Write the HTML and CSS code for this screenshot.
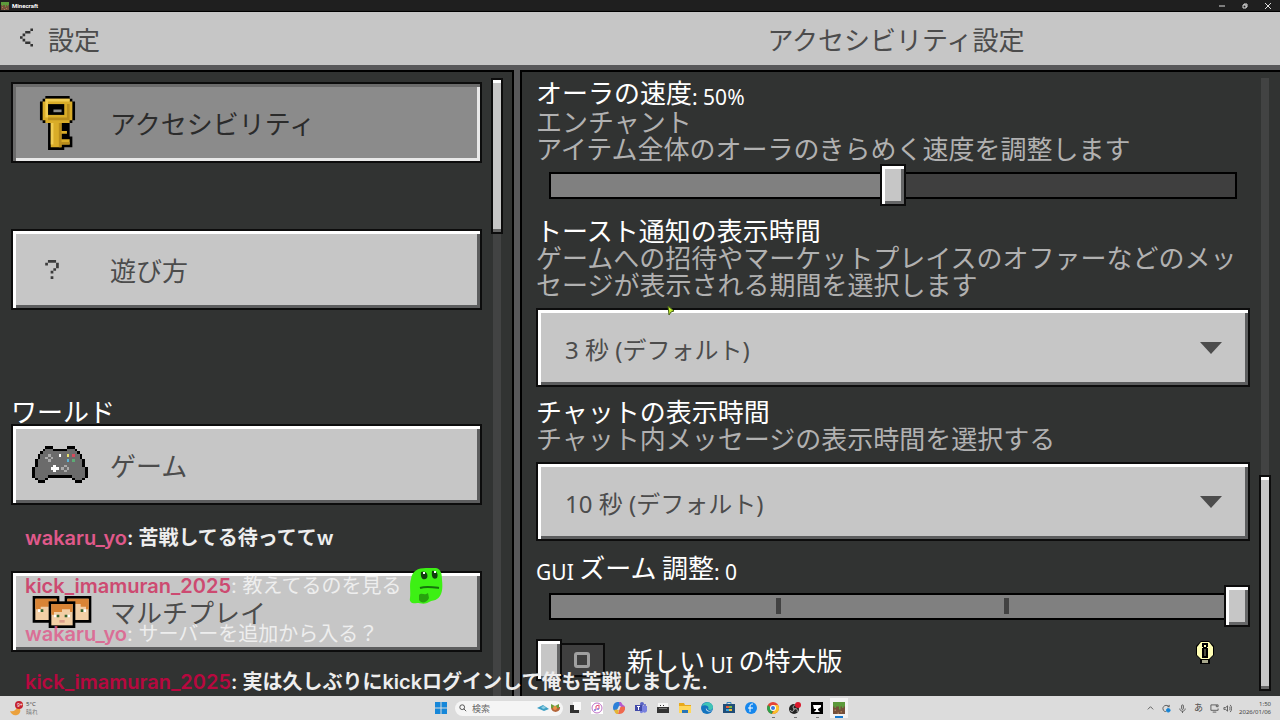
FILE: index.html
```html
<!DOCTYPE html>
<html lang="ja">
<head>
    <meta charset="UTF-8">
    <meta name="viewport" content="width=device-width, initial-scale=1.0">
    <title>Minecraft</title>
    <link rel="stylesheet" href="styles.css">
</head>
<body>
    <div class="titlebar">
        <svg class="grass" viewBox="0 0 8 8"><path fill="#76503a" d="M0 0h8v8H0z"/><path fill="#5d9a3b" d="M0 0h8v3H7v1H6V3H5v2H4V3H2v1H1V3H0z"/><path fill="#a87b58" d="M1 5h1v1H1zM5 6h1v1H5zM3 7h1v1H3z"/></svg>
        <span class="app-name">Minecraft</span>
        <div class="window-buttons">
            <button aria-label="最小化"><svg viewBox="0 0 8 8"><path d="M1 4h6"/></svg></button>
            <button aria-label="元に戻す"><svg viewBox="0 0 8 8"><path d="M2 3h3v3H2zM3 3V2h3v3H5"/></svg></button>
            <button aria-label="閉じる"><svg viewBox="0 0 8 8"><path d="M1 1l6 6M7 1L1 7"/></svg></button>
        </div>
    </div>

    <header class="header">
        <button class="back">
            <svg viewBox="0 0 5 7"><path d="M4 0h1v1H4zM3 1h1v1H3zM2 1h1v1H2zM1 2h1v1H1zM0 3h1v1H0zM1 4h1v1H1zM2 5h1v1H2zM3 5h1v1H3zM4 6h1v1H4z"/></svg>
            設定
        </button>
        <h1>アクセシビリティ設定</h1>
    </header>

    <main class="panels">
        <div class="panel panel-left">
            <nav class="menu">
                <button class="menu-item active">
                    <svg class="icon key" viewBox="0 0 13 20">
                        <path d="M2 0h9v1h1v1h1v7h-1v1h-1v5h1v4H9v1H3V10H1V9H0V2h1V1h1z"/>
                        <path fill="#d9ac28" d="M2 1h9v1h1v7h-1v1H2V9H1V2h1zM4 10h4v9H4zM8 13h2v1H8zM8 16h3v2H8z"/>
                        <path fill="#f0cc52" d="M2 1h9v1H3v6H2zM4 10h1v8H4z"/>
                        <path fill="#b88c1c" d="M10 3h1v6H3V8h7zM7 10h1v9H7zM8 17h3v1H8z"/>
                        <path d="M3 3h6v4H3z"/><path fill="#8b8b8b" d="M5 5h3v1H5z"/>
                    </svg>
                    アクセシビリティ
                </button>
                <button class="menu-item">
                    <svg class="icon question" viewBox="0 0 5 7"><path fill="#3c3c3c" d="M1 0h3v1h1v2H4v1H3v1H2V4h1V3h1V1H1v1H0V1h1zM2 6h1v1H2z"/></svg>
                    遊び方
                </button>
                <h2>ワールド</h2>
                <button class="menu-item">
                    <svg class="icon pad" viewBox="0 0 21 14" shape-rendering="crispEdges">
                        <path d="M5 0h3v1h5V0h3v1h1v1h1v1h1v2h1v3h1v4h-1v1h-1v1h-3v-1h-1v-1H6v1H5v1H2v-1H1v-1H0V8h1V5h1V3h1V2h1V1h1z"/>
                        <path fill="#6b6b6b" d="M5 1h3v1h5V1h3v1h1v1h1v2h1v3h1v4h-1v1h-3v-1h-1v-1H6v1H5v1H2v-1H1V8h1V5h1V3h1V2h1z"/>
                        <path fill="#fff" d="M8 7h1v1h1v1H9v1H8V9H7V8h1zM10 3h1v1h-1z"/>
                        <path fill="#aaa" d="M6 3h1v1H6zM5 4h1v1H5zM7 4h1v1H7zM6 5h1v1H6zM12 7h1v1h-1zM11 8h1v1h-1zM13 8h1v1h-1zM12 9h1v1h-1z"/>
                        <path fill="#e7e06a" d="M13 3h1v1h-1z"/><path fill="#d64a5c" d="M15 3h1v1h-1z"/><path fill="#58b3d6" d="M13 5h1v1h-1z"/><path fill="#5dab75" d="M15 5h1v1h-1z"/>
                    </svg>
                    ゲーム
                </button>
                <button class="menu-item">
                    <svg class="icon faces" viewBox="0 0 22 12">
                        <path d="M0 0h10v10H0zM12 0h10v10H12z"/>
                        <path fill="#f2cfa6" d="M1 1h8v8H1zM13 1h8v8h-8z"/>
                        <path fill="#d98435" d="M1 1h8v2H6v1H3v1H1zM13 1h8v4h-1V4h-2V3h-5z"/>
                        <path fill="#fff" d="M2 5h1v1H2zM19 5h1v1h-1z"/>
                        <path fill="#35622b" d="M3 5h1v1H3zM18 5h1v1h-1z"/>
                        <path d="M6 2h10v10H6z"/>
                        <path fill="#f2cfa6" d="M7 3h8v8H7z"/>
                        <path fill="#d98435" d="M7 3h8v3h-1V5h-3v1H8v1H7z"/>
                        <path fill="#fff" d="M8 7h1v1H8zM13 7h1v1h-1z"/><path fill="#35622b" d="M9 7h1v1H9zM12 7h1v1h-1z"/><path fill="#dc9d8b" d="M10 9h2v1h-2z"/>
                    </svg>
                    マルチプレイ
                </button>
            </nav>
            <div class="scroll"><div class="thumb"></div></div>
        </div>

        <div class="panel panel-right">
            <div class="settings">
                <section>
                    <label class="name" for="glint">オーラの速度<span class="latin">: 50%</span></label>
                    <p>エンチャント<br>アイテム全体のオーラのきらめく速度を調整します</p>
                    <input class="slider" type="range" id="glint" min="0" max="100" value="50">
                </section>
                <section>
                    <label class="name" for="toast">トースト通知の表示時間</label>
                    <p>ゲームへの招待やマーケットプレイスのオファーなどのメッセージが表示される期間を選択します</p>
                    <div class="dropdown">
                        <select id="toast"><option>3 秒 (デフォルト)</option></select>
                        <svg viewBox="0 0 22 12"><path d="M0 0h22L11 12z"/></svg>
                    </div>
                </section>
                <section>
                    <label class="name" for="chat-time">チャットの表示時間</label>
                    <p>チャット内メッセージの表示時間を選択する</p>
                    <div class="dropdown">
                        <select id="chat-time"><option>10 秒 (デフォルト)</option></select>
                        <svg viewBox="0 0 22 12"><path d="M0 0h22L11 12z"/></svg>
                    </div>
                </section>
                <section class="gui-zoom">
                    <label class="name" for="zoom"><span class="latin">GUI </span>ズーム<span class="latin"> </span>調整<span class="latin">: 0</span></label>
                    <input class="slider steps" type="range" id="zoom" min="-3" max="0" value="0">
                </section>
                <div class="toggle-row">
                    <input type="checkbox" id="large-ui">
                    <label for="large-ui">新しい<span class="latin"> UI </span>の特大版</label>
                    <svg class="bulb" viewBox="0 0 18 23"><path d="M5 0h8l5 5v9l-4 4v5H4v-5l-4-4V5z"/><path fill="#ffffb5" d="M5 1h8l4 5v8l-4 4H5l-4-4V6z"/><path d="M6 2h6v5H6zM6 7h6v10H6z"/><path fill="#ffffb5" d="M8 4h2v2H8zM6 6h1v1H6zM11 6h1v1h-1z"/><path fill="#4e4e40" d="M8 8h2v7H8z"/><path fill="#a5a58a" d="M6 19h6v3H6z"/></svg>
                </div>
            </div>
            <div class="scroll"><div class="thumb"></div></div>
        </div>
    </main>

    <div class="chat">
        <div class="line"><b class="pink">wakaru_yo</b><b>: 苦戦してる待っててw</b></div>
        <div class="line faded"><b class="rose">kick_imamuran_2025</b><span>: 教えてるのを見る</span><svg class="emote" viewBox="0 0 34 38">
                <path fill="#3df014" d="M2 12C3 4 9 1 17 1h10c5 1 6 6 6 12 1 9 0 16-5 19-2 2-5 1-8 3-4 3-9 1-12 1-5 1-8-1-7-5 1-6-1-13 1-19z"/>
                <path fill="#123d10" d="M12 5c4-2 8 2 6 6-3 3-7 1-6-6zM23 4c4-1 7 3 5 7-3 2-6 0-5-7z"/>
                <path fill="#fff" d="M14 5h2v2h-2zM25 4h2v2h-2z"/>
                <path fill="none" stroke="#16730c" stroke-width="2" d="M11 21c6-2 12-1 19 0"/>
                <path fill="#27a30e" d="M10 28c3-3 5 1 9-2l1 5c-2 5-8 6-10 2z"/>
            </svg></div>
        <div class="line faded"><b class="pink">wakaru_yo</b><span>: サーバーを追加から入る？</span></div>
        <div class="line"><b class="crimson">kick_imamuran_2025</b><b>: 実は久しぶりにkickログインして俺も苦戦しました.</b></div>
    </div>
    <svg class="cursor" viewBox="0 0 8 10"><path d="M1 0l6 5-3 1-2 3z"/></svg>

    <footer class="taskbar">
        <div class="weather">
            <svg viewBox="0 0 16 16"><path fill="#eba13c" d="M1 11c4 1 6-1 7-4 5 1 4 7 0 8-3 1-6-1-7-4z"/><circle cx="10" cy="5" r="4" fill="#c5222f"/><text x="8" y="7">9+</text></svg>
            <div>5°C<br><span>晴れ</span></div>
        </div>
        <div class="apps">
            <button aria-label="スタート"><svg viewBox="0 0 12 12"><path fill="#1687d9" d="M0 0h5.5v5.5H0zM6.500 0H12v5.500H6.500zM0 6.500h5.500V12H0zM6.500 6.500H12V12H6.500z"/></svg></button>
            <label class="search">
                <svg class="lens" viewBox="0 0 10 10"><circle cx="4" cy="4" r="3"/><path d="M6 6l3 3"/></svg>
                <input type="text" placeholder="検索" aria-label="検索">
                <svg class="art" viewBox="0 0 24 10"><path fill="#3d9fc4" d="M0 5l6-3 6 4-5 2z"/><path fill="#8fd0e4" d="M4 4l3-1 2 2-3 1z"/><path fill="#b4653a" d="M14 4h9c1 6-9 7-9 0z"/><path fill="#6c9d3d" d="M14 1l4 2 4-2v4h-8z"/><circle cx="18" cy="5" r="2" fill="#ee9348"/></svg>
            </label>
            <button aria-label="タスク ビュー"><svg viewBox="0 0 12 12"><path fill="#fafafa" d="M4 0h8v8H4z"/><path fill="#303030" d="M1 3h4v5h5v3H1z"/></svg></button>
            <button aria-label="ミュージック"><svg viewBox="0 0 12 12"><path fill="#fff" d="M0 0h12v12H0z"/><circle cx="6" cy="6" r="5" fill="none" stroke="#bd70c4"/><path fill="none" stroke="#e74b77" d="M5 8V4l3-1v4"/><circle cx="4" cy="8" r="1" fill="#7b70e1"/><circle cx="7" cy="7" r="1" fill="#7b70e1"/></svg></button>
            <button aria-label="Copilot"><svg viewBox="0 0 12 12"><path fill="#2c80d8" d="M0 6c0-4 2-6 5-6h3L5 8C3 10 0 9 0 6z"/><path fill="#b35ad2" d="M6 0c3-1 3 3 4 3 3 1 2 4 1 6L7 5z"/><path fill="#f0694d" d="M12 7c-1 4-3 5-7 5l2-7c3-1 6-1 5 2z"/><path fill="#e6b434" d="M1 8l5-1-1 5c-3 0-3-2-4-4z"/><path fill="#ddd" d="M6 4h2L6 8H4z"/></svg></button>
            <button aria-label="Teams"><svg viewBox="0 0 12 12"><circle cx="7" cy="2" r="2" fill="#5962c5"/><circle cx="10" cy="3" r="1" fill="#5962c5"/><path fill="#7880df" d="M5 4h7v5c-1 2-3 2-4 1-1 2-3 1-3 0z"/><path fill="#424aa9" d="M0 3h7v6H0z"/><path stroke="#fff" d="M2 4.500h3M3.500 4v4"/></svg></button>
            <button aria-label="録画"><svg viewBox="0 0 12 12"><path fill="#f5f5f5" d="M1 1h10v4H1z"/><path fill="#333" d="M0 5h12v6H0zM3 3h1v1H3zM6 3h1v1H6z"/><path fill="#777" d="M2 6h8v1H2z"/></svg></button>
            <button aria-label="エクスプローラー"><svg viewBox="0 0 12 12"><path fill="#e8a91b" d="M0 1h5l1 2h6v7H0z"/><path fill="#ffd75a" d="M0 4h12v7H0z"/><path fill="#2875b8" d="M3 8h6v3H3z"/></svg></button>
            <button aria-label="Edge"><svg viewBox="0 0 12 12"><circle cx="6" cy="6" r="6" fill="#1474bf"/><path fill="#40c4b6" d="M1 4c2-5 10-5 11 1 0 3-3 4-5 2 2-3-3-5-6-3z"/><path fill="#e1eef4" d="M5 6c1 3 4 4 6 2-2 3-7 1-6-2z"/></svg></button>
            <button aria-label="Store"><svg viewBox="0 0 12 12"><path fill="#204d78" d="M0 2h12v9H0z"/><path fill="none" stroke="#3a86bd" d="M4 2V.500h4V2"/><path fill="#e95b38" d="M3 4h3v2H3z"/><path fill="#7ab843" d="M6 4h3v2H6z"/><path fill="#35a7df" d="M3 7h3v2H3z"/><path fill="#f3bd35" d="M6 7h3v2H6z"/></svg></button>
            <button aria-label="音楽アプリ"><svg viewBox="0 0 12 12"><circle cx="6" cy="6" r="6" fill="#1687ed"/><path fill="none" stroke="#fff" d="M5 10V4c0-2 2-2 3-2M3 6h5"/></svg></button>
            <button class="running" aria-label="Chrome"><svg viewBox="0 0 12 12"><circle cx="6" cy="6" r="6" fill="#e54335"/><path fill="#2ca24c" d="M1 3l5 5-1 4C0 11-1 6 1 3z"/><path fill="#fac32c" d="M6 3h5c3 5-1 9-6 9l3-5z"/><circle cx="6" cy="6" r="3" fill="#fff"/><circle cx="6" cy="6" r="2" fill="#3978dc"/></svg></button>
            <button class="running" aria-label="OBS"><svg viewBox="0 0 12 12"><circle cx="5" cy="7" r="5" fill="#222"/><path fill="none" stroke="#bbb" d="M5 7c-2-2 0-4 1-4M5 7c3-1 4 1 3 3M5 7c0 3-3 3-4 1"/><circle cx="9" cy="3" r="3" fill="#d9182b"/></svg></button>
            <button class="running" aria-label="ツール"><svg viewBox="0 0 12 12"><path d="M0 0h12v12H0z"/><path fill="#fff" d="M2 3h8v2L7 7v1l2 2H3l2-2V7H3z"/></svg></button>
            <button class="running current" aria-label="Minecraft"><svg viewBox="0 0 8 8"><path fill="#76503a" d="M0 0h8v8H0z"/><path fill="#5d9a3b" d="M0 0h8v3H7v1H6V3H5v2H4V3H2v1H1V3H0z"/><path fill="#a87b58" d="M1 5h1v1H1zM5 6h1v1H5zM3 7h1v1H3z"/></svg></button>
        </div>
        <div class="tray">
            <svg viewBox="0 0 10 10"><path d="M2 6l3-3 3 3"/></svg>
            <svg viewBox="0 0 10 10"><path d="M8 3C5 0 1 2 1 5s3 4 4 3M8 1v2H6"/><circle cx="7" cy="7" r="2" fill="#1484d6" stroke="#1484d6"/></svg>
            <svg viewBox="0 0 10 10"><rect x="4" y="1" width="2" height="5" rx="1"/><path d="M2 5c0 4 6 4 6 0M5 8v2"/></svg>
            <span>あ</span>
            <div class="devices">
                <svg viewBox="0 0 10 10"><path d="M7 1H1v6h8V5M3 9h4M7 1h2v2H7z"/></svg>
                <svg viewBox="0 0 10 10"><path d="M1 4h2l2-2v6L3 6H1zM7 3c1 1 1 3 0 4M8 1c2 2 2 6 0 8"/></svg>
            </div>
            <div class="clock">1:50<br>2026/01/06</div>
        </div>
    </footer>
</body>
</html>
```
FILE: styles.css
```css
*, *::before, *::after {
    box-sizing: border-box;
}

body {
    margin: 0;
    height: 100vh;
    display: flex;
    flex-direction: column;
    overflow: hidden;
    position: relative;
    background-color: #313332;
    color: #fff;
    font-family: "Noto Sans CJK JP", "Noto Sans", sans-serif;
    font-size: 26px;
    line-height: 27px;
}

button, input, select {
    font: inherit;
    margin: 0;
}

button {
    border: none;
    padding: 0;
    background: none;
    color: inherit;
}

h1, h2, p {
    margin: 0;
    font-size: inherit;
    font-weight: normal;
}

svg {
    display: block;
    flex-shrink: 0;
}

/* window title bar */
.titlebar {
    flex: 0 0 12px;
    display: flex;
    align-items: center;
    background-color: #1f1f1f;
    border-bottom: 1px solid #000;
    font-family: Roboto, sans-serif;
    font-size: 6px;
    font-weight: bold;
    line-height: 10px;
}

.grass {
    width: 8px;
    height: 8px;
    margin: 0 3px 0 1px;
}

.window-buttons {
    margin-left: auto;
    display: flex;
    gap: 15px;
    padding-right: 8px;
}

.window-buttons svg {
    width: 8px;
    height: 8px;
    fill: none;
    stroke: #ddd;
}

/* header */
.header {
    flex: 0 0 58px;
    display: grid;
    grid-template-columns: 40% 1fr;
    align-items: center;
    background-color: #c6c6c6;
    border-bottom: 5px solid #58585a;
    color: #4c4c4c;
}

.header h1 {
    text-align: center;
}

.back {
    display: flex;
    align-items: center;
    gap: 15px;
    padding-left: 20px;
}

.back svg {
    width: 13px;
    height: 19px;
    margin-bottom: 2px;
    fill: #333;
}

/* panels */
.panels {
    flex: 1;
    min-height: 0;
    display: grid;
    grid-template-columns: calc(40% + 2px) 1fr;
    gap: 6px;
    background-color: #58585a;
}

.panel {
    min-height: 0;
    overflow: hidden;
    display: flex;
    background-color: #313332;
    border-top: 2px solid #000;
}

.panel-left {
    border-right: 2px solid #000;
    padding-right: 9px;
}

.panel-right {
    border-left: 2px solid #000;
    padding-right: 9px;
}

.scroll {
    width: 12px;
    margin: 6px 0 5px;
    display: flex;
    flex-direction: column;
    background: linear-gradient(#424343, #424343) center / 8px 100% no-repeat;
}

.panel-left .scroll {
    margin-bottom: 0;
}

.thumb {
    height: 156px;
    background-color: #c6c6c6;
    border: 2px solid #0c0c0c;
    box-shadow: inset 0 3px #fff, inset 0 -3px #656565;
}

.panel-right .thumb {
    height: 216px;
    margin-top: auto;
}

/* left menu */
.menu {
    flex: 1;
    padding: 10px 9px 0 11px;
}

.menu-item {
    width: 100%;
    height: 81px;
    display: flex;
    align-items: center;
    padding-left: 19px;
    margin-bottom: 66px;
    color: #4c4c4c;
    background-color: #c6c6c6;
    border: 2px solid #0c0c0c;
    box-shadow: inset 3px 3px #fff, inset -3px -3px #5c5d5e;
}

.menu-item.active {
    color: #2b2b2b;
    background-color: #8b8b8b;
    box-shadow: inset 3px 3px #6b6b6b, inset -3px -3px #e8e8e8;
}

.menu h2 {
    margin-top: 87px;
}

.icon {
    width: 60px;
    height: 54px;
    margin-right: 18px;
}

.question {
    height: 19px;
    padding-right: 20px;
}

.key {
    padding-right: 9px;
}

.pad {
    height: 37px;
    padding-right: 4px;
}

.faces {
    height: 32px;
}

/* settings */
.settings {
    flex: 1;
    min-width: 0;
    padding: 6px 9px 0 14px;
}

.settings section {
    margin-bottom: 10px;
}

.settings .gui-zoom {
    margin: 12px 0;
}

.name {
    display: block;
}

.settings p {
    color: #b1b1b1;
    word-break: break-all;
}

/* latin text sits a little lower than the kana */
.latin {
    font-family: "Noto Sans", sans-serif;
    font-size: 21px;
    line-height: 20px;
    vertical-align: -2px;
    white-space: pre;
}

.slider {
    --fill: 50%;
    appearance: none;
    display: block;
    width: 100%;
    height: 42px;
    margin-top: 3px;
    background:
        linear-gradient(to right, #808080 var(--fill), #3f3f3f 0) center / calc(100% - 30px) 23px no-repeat,
        linear-gradient(#000, #000) center / calc(100% - 26px) 27px no-repeat;
}

.slider.steps {
    --fill: 100%;
    background:
        linear-gradient(to right, transparent calc(100% / 3 - 3px), #424242 0 calc(100% / 3 + 2px), transparent 0 calc(200% / 3 - 3px), #424242 0 calc(200% / 3 + 2px), transparent 0) center / calc(100% - 30px) 16px no-repeat,
        linear-gradient(#808080, #808080) center / calc(100% - 30px) 23px no-repeat,
        linear-gradient(#000, #000) center / calc(100% - 26px) 27px no-repeat;
}

.slider::-webkit-slider-thumb {
    appearance: none;
    width: 26px;
    height: 42px;
    background-color: #c6c6c6;
    border: 2px solid #0c0c0c;
    box-shadow: inset 3px 3px #fff, inset -3px -3px #656667;
}

.dropdown {
    display: grid;
    align-items: center;
    margin-top: 11px;
}

.dropdown select, .dropdown svg {
    grid-area: 1 / 1;
}

.dropdown select {
    appearance: none;
    width: 100%;
    height: 79px;
    padding: 4px 60px 0 27px;
    font-family: "Noto Sans", "Noto Sans CJK JP", sans-serif;
    font-size: 24px;
    color: #4c4c4c;
    background-color: #c6c6c6;
    border: 2px solid #0c0c0c;
    border-radius: 0;
    box-shadow: inset 3px 3px #fff, inset -3px -3px #5c5d5e;
}

.dropdown svg {
    justify-self: end;
    width: 22px;
    height: 12px;
    margin-right: 28px;
    fill: #4c4c4c;
    pointer-events: none;
}

.toggle-row {
    display: flex;
    align-items: center;
}

.toggle-row input {
    appearance: none;
    width: 69px;
    height: 34px;
    margin: 4px 22px 4px 0;
    display: flex;
    align-items: center;
    gap: 12px;
    background-color: #3f3f3f;
    border: 2px solid #0c0c0c;
}

.toggle-row input::before {
    content: "";
    width: 26px;
    height: 42px;
    margin-left: -2px;
    flex-shrink: 0;
    background-color: #c6c6c6;
    border: 2px solid #0c0c0c;
    box-shadow: inset 3px 3px #fff, inset -3px -3px #656667;
}

.toggle-row input::after {
    content: "";
    width: 16px;
    height: 16px;
    border: 3px solid #a0a0a0;
    border-radius: 3px;
}

.bulb {
    width: 18px;
    height: 23px;
    margin: 0 36px 16px auto;
}

/* stream chat drawn over the game */
.chat {
    position: absolute;
    left: 25px;
    bottom: 26px;
    display: flex;
    flex-direction: column;
    gap: 24px;
    font-family: Inter, "Noto Sans CJK JP", sans-serif;
    font-size: 20px;
    line-height: 24px;
    color: #eee;
    pointer-events: none;
}

.line {
    height: 24px;
    display: flex;
    align-items: center;
    white-space: pre;
}

.line b {
    font-weight: 600;
}

.pink {
    color: #e0598b;
}

.rose {
    color: #cf2c5c;
}

.crimson {
    color: #b8083f;
}

.faded .pink, .faded .rose {
    opacity: 0.8;
}

.emote {
    width: 34px;
    height: 38px;
    margin-left: 8px;
}

.cursor {
    position: absolute;
    left: 667px;
    top: 306px;
    width: 8px;
    height: 10px;
    fill: #c4ee2c;
    stroke: #49651c;
}

/* taskbar */
.taskbar {
    flex: 0 0 24px;
    display: grid;
    grid-template-columns: 1fr auto 1fr;
    align-items: center;
    background-color: #dcdcdc;
    color: #444;
    font-family: "Noto Sans", "Noto Sans CJK JP", sans-serif;
    font-size: 6px;
    line-height: 8px;
}

.weather {
    display: flex;
    align-items: center;
    gap: 1px;
    padding-left: 9px;
}

.weather svg {
    width: 16px;
    height: 16px;
}

.weather text {
    fill: #fff;
    font-size: 5px;
}

.weather span {
    color: #777;
}

.apps {
    display: flex;
    align-items: center;
}

.apps button {
    width: 22px;
    height: 24px;
    display: flex;
    flex-direction: column;
    align-items: center;
    justify-content: center;
    position: relative;
}

.apps button svg {
    width: 12px;
    height: 12px;
}

.running::after {
    content: "";
    position: absolute;
    bottom: 2px;
    width: 3px;
    height: 1px;
    background-color: #777;
}

.apps .current {
    width: 18px;
    height: 20px;
    margin: 0 2px;
    background-color: #f3f3f3;
}

.current::after {
    bottom: 0;
    width: 8px;
    height: 2px;
    background-color: #1679cf;
}

.search {
    width: 108px;
    height: 15px;
    display: flex;
    align-items: center;
    margin: 0 1px 0 3px;
    padding: 0 2px 0 4px;
    background-color: #f5f5f5;
    border-radius: 8px;
}

.search input {
    flex: 1;
    min-width: 0;
    height: 14px;
    padding: 0 0 0 5px;
    border: none;
    background: none;
    font-size: 9px;
}

.search input::placeholder {
    color: #666;
}

.lens {
    width: 8px;
    height: 8px;
    fill: none;
    stroke: #333;
}

.art {
    width: 24px;
    height: 10px;
}

.tray {
    display: flex;
    align-items: center;
    justify-content: flex-end;
    gap: 7px;
    padding-right: 9px;
}

.tray svg {
    width: 9px;
    height: 9px;
    fill: none;
    stroke: #555;
}

.tray span {
    font-size: 9px;
}

.devices {
    display: flex;
    gap: 4px;
}

.clock {
    min-width: 32px;
    text-align: right;
}
```
